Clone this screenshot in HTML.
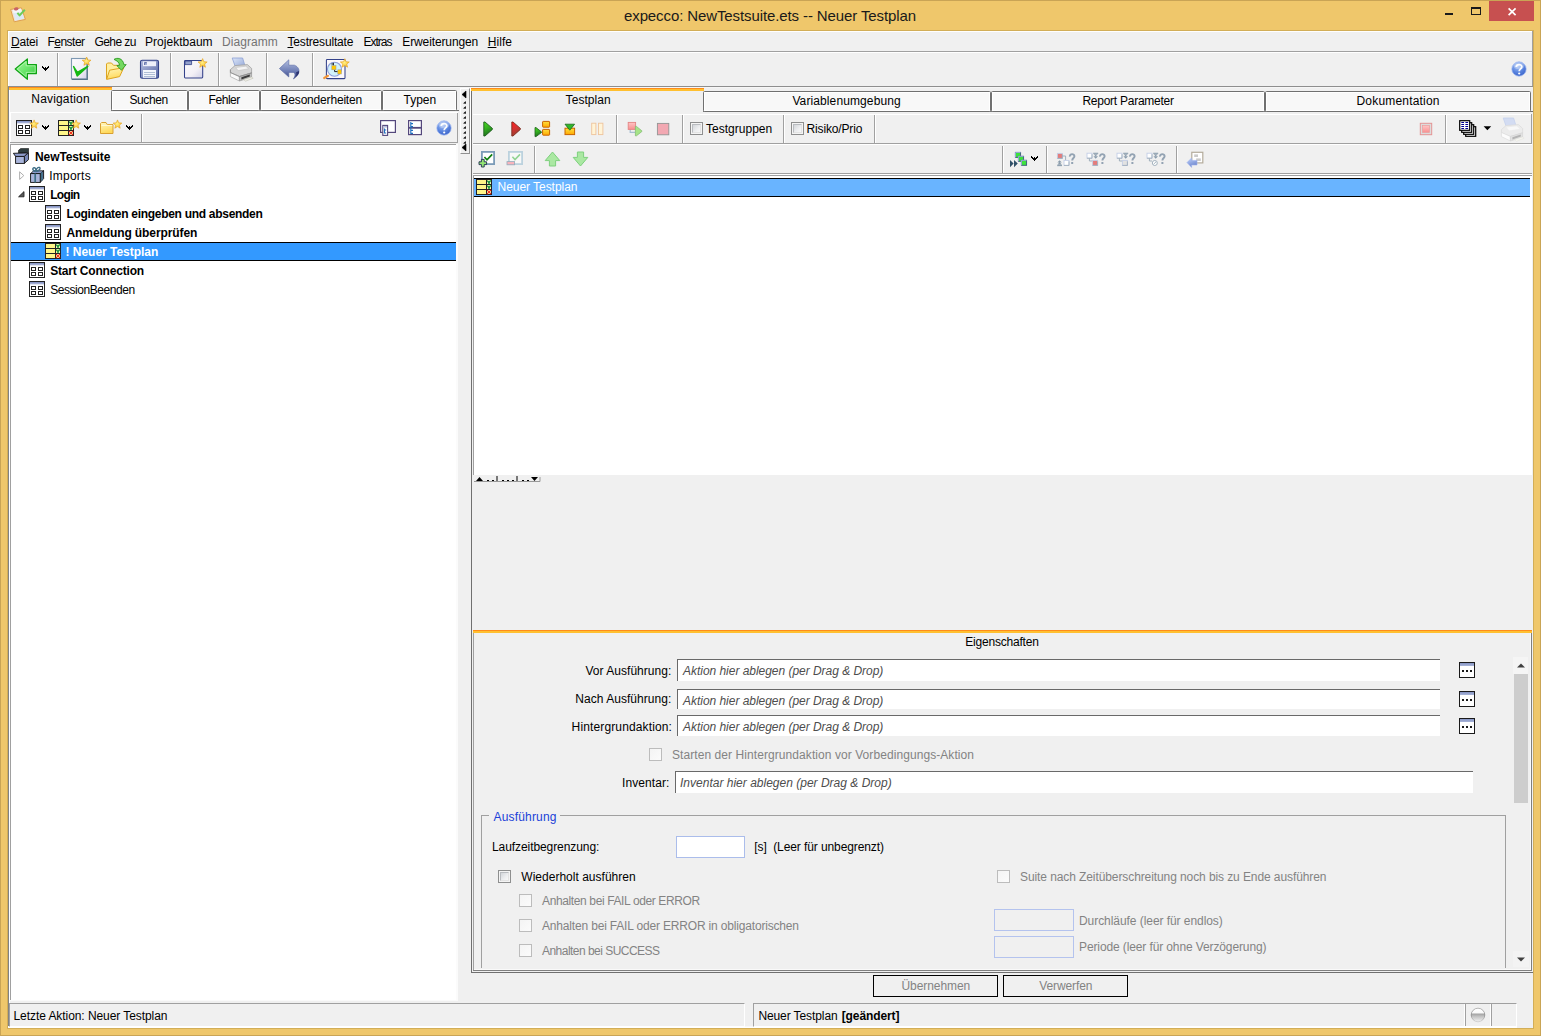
<!DOCTYPE html><html><head><meta charset="utf-8"><title>expecco</title><style>html,body{margin:0;padding:0}body{width:1541px;height:1036px;position:relative;overflow:hidden;background:#F0F0F0;font-family:"Liberation Sans",sans-serif;font-size:12px}div,span.t,svg{position:absolute;display:block}div{box-sizing:border-box}span.t{white-space:pre}u{text-decoration:underline;text-underline-offset:1px}</style></head><body>
<div style="left:0px;top:0px;width:1541px;height:1036px;background:#EFC76B;"></div>
<div style="left:0px;top:0px;width:1541px;height:1px;background:#C9A455;"></div>
<div style="left:0px;top:0px;width:1px;height:1036px;background:#C9A455;"></div>
<div style="left:1540px;top:0px;width:1px;height:1036px;background:#C9A455;"></div>
<div style="left:0px;top:1035px;width:1541px;height:1px;background:#C9A455;"></div>
<div style="left:7px;top:30px;width:1527px;height:999px;background:#D2AE58;"></div>
<div style="left:8px;top:31px;width:1525px;height:997px;background:#F0F0F0;"></div>
<div style="left:8px;top:31px;width:1525px;height:1px;background:#FFFFFF;"></div>
<div style="left:8px;top:31px;width:1px;height:56px;background:#FFFFFF;"></div>
<div style="left:1532px;top:31px;width:1px;height:56px;background:#A0A0A0;"></div>
<div style="left:8px;top:87px;width:1px;height:939px;background:#828282;"></div>
<div style="left:9px;top:87px;width:1px;height:916px;background:#FFFFFF;"></div>
<div style="left:8px;top:1026px;width:1509px;height:1px;background:#F8F8F8;"></div>
<div style="left:8px;top:1027px;width:1509px;height:1px;background:#FFFFFF;"></div>
<div style="left:1489px;top:1px;width:45px;height:20px;background:#C75050;"></div>
<svg style="left:1507px;top:7px" width="10" height="10" viewBox="0 0 10 10"><path d="M1.6 1.4 L8.6 8.2 M8.6 1.4 L1.6 8.2" stroke="#fff" stroke-width="1.7" fill="none"/></svg>
<div style="left:1445px;top:13px;width:8px;height:2px;background:#1a1a1a;"></div>
<div style="left:1471px;top:7px;width:10px;height:8px;border:1px solid #1a1a1a;border-top-width:2px"></div>
<span id="t1" class="t" style="left:624.00px;top:6px;font-size:15px;line-height:19px;font-weight:normal;font-style:normal;color:#1a1a1a;letter-spacing:-0.106px;">expecco: NewTestsuite.ets -- Neuer Testplan</span>
<div style="left:8px;top:51px;width:1525px;height:1px;background:#A0A0A0;"></div>
<div style="left:8px;top:52px;width:1524px;height:1px;background:#FFFFFF;"></div>
<span id="t2" class="t" style="left:11.00px;top:34px;font-size:12px;line-height:16px;font-weight:normal;font-style:normal;color:#000;letter-spacing:-0.212px;"><u>D</u>atei</span>
<span id="t3" class="t" style="left:47.50px;top:34px;font-size:12px;line-height:16px;font-weight:normal;font-style:normal;color:#000;letter-spacing:-0.531px;">F<u>e</u>nster</span>
<span id="t4" class="t" style="left:94.50px;top:34px;font-size:12px;line-height:16px;font-weight:normal;font-style:normal;color:#000;letter-spacing:-0.582px;">Gehe zu</span>
<span id="t5" class="t" style="left:145.00px;top:34px;font-size:12px;line-height:16px;font-weight:normal;font-style:normal;color:#000;letter-spacing:0.023px;">Projektbaum</span>
<span id="t6" class="t" style="left:222.00px;top:34px;font-size:12px;line-height:16px;font-weight:normal;font-style:normal;color:#737373;letter-spacing:0.065px;">Diagramm</span>
<span id="t7" class="t" style="left:287.50px;top:34px;font-size:12px;line-height:16px;font-weight:normal;font-style:normal;color:#000;letter-spacing:-0.180px;"><u>T</u>estresultate</span>
<span id="t8" class="t" style="left:363.50px;top:34px;font-size:12px;line-height:16px;font-weight:normal;font-style:normal;color:#000;letter-spacing:-1.002px;">Extras</span>
<span id="t9" class="t" style="left:402.30px;top:34px;font-size:12px;line-height:16px;font-weight:normal;font-style:normal;color:#000;letter-spacing:-0.117px;">Erweiterungen</span>
<span id="t10" class="t" style="left:487.70px;top:34px;font-size:12px;line-height:16px;font-weight:normal;font-style:normal;color:#000;letter-spacing:0.067px;"><u>H</u>ilfe</span>
<div style="left:8px;top:86px;width:1525px;height:1px;background:#8E8E8E;"></div>
<div style="left:9px;top:87px;width:1523px;height:1px;background:#F6F6F6;"></div>
<div style="left:57px;top:53px;width:1px;height:33px;background:#A0A0A0;"></div>
<div style="left:58px;top:53px;width:1px;height:33px;background:#FFFFFF;"></div>
<div style="left:170px;top:53px;width:1px;height:33px;background:#A0A0A0;"></div>
<div style="left:171px;top:53px;width:1px;height:33px;background:#FFFFFF;"></div>
<div style="left:218px;top:53px;width:1px;height:33px;background:#A0A0A0;"></div>
<div style="left:219px;top:53px;width:1px;height:33px;background:#FFFFFF;"></div>
<div style="left:266px;top:53px;width:1px;height:33px;background:#A0A0A0;"></div>
<div style="left:267px;top:53px;width:1px;height:33px;background:#FFFFFF;"></div>
<div style="left:312px;top:53px;width:1px;height:33px;background:#A0A0A0;"></div>
<div style="left:313px;top:53px;width:1px;height:33px;background:#FFFFFF;"></div>
<div style="left:111px;top:110px;width:348px;height:1px;background:#707070;"></div>
<div style="left:111px;top:90px;width:77px;height:21px;background:#F8F8F8;border:1px solid #707070;border-radius:1.5px;box-shadow:inset 0 0 0 1px #fff"></div>
<div style="left:188px;top:90px;width:72px;height:21px;background:#F8F8F8;border:1px solid #707070;border-radius:1.5px;box-shadow:inset 0 0 0 1px #fff"></div>
<div style="left:260px;top:90px;width:122px;height:21px;background:#F8F8F8;border:1px solid #707070;border-radius:1.5px;box-shadow:inset 0 0 0 1px #fff"></div>
<div style="left:382px;top:90px;width:75px;height:21px;background:#F8F8F8;border:1px solid #707070;border-radius:1.5px;box-shadow:inset 0 0 0 1px #fff"></div>
<div style="left:9px;top:87px;width:103px;height:1px;background:#FF8C1A;"></div>
<div style="left:9px;top:88px;width:103px;height:2px;background:#FFC030;"></div>
<span id="t11" class="t" style="left:31.30px;top:91px;font-size:12px;line-height:16px;font-weight:normal;font-style:normal;color:#000;letter-spacing:0.175px;">Navigation</span>
<span id="t12" class="t" style="left:129.50px;top:92px;font-size:12px;line-height:16px;font-weight:normal;font-style:normal;color:#000;letter-spacing:-0.405px;">Suchen</span>
<span id="t13" class="t" style="left:208.60px;top:92px;font-size:12px;line-height:16px;font-weight:normal;font-style:normal;color:#000;letter-spacing:-0.464px;">Fehler</span>
<span id="t14" class="t" style="left:280.50px;top:92px;font-size:12px;line-height:16px;font-weight:normal;font-style:normal;color:#000;letter-spacing:-0.184px;">Besonderheiten</span>
<span id="t15" class="t" style="left:403.50px;top:92px;font-size:12px;line-height:16px;font-weight:normal;font-style:normal;color:#000;letter-spacing:-0.004px;">Typen</span>
<div style="left:10px;top:112px;width:448px;height:1px;background:#FFFFFF;"></div>
<div style="left:10px;top:112px;width:1px;height:31px;background:#FFFFFF;"></div>
<div style="left:10px;top:142px;width:448px;height:1px;background:#A0A0A0;"></div>
<div style="left:457px;top:113px;width:1px;height:30px;background:#A0A0A0;"></div>
<div style="left:141px;top:114px;width:1px;height:28px;background:#A0A0A0;"></div>
<div style="left:142px;top:114px;width:1px;height:28px;background:#FFFFFF;"></div>
<div style="left:456px;top:144px;width:2px;height:857px;background:#FBFBFB;"></div>
<div style="left:10px;top:144px;width:446px;height:856px;background:#FFFFFF;border-top:1px solid #A0A0A0;border-left:1px solid #A0A0A0"></div>
<div style="left:10px;top:1000px;width:448px;height:1px;background:#FAFAFA;"></div>
<div style="left:11px;top:242px;width:445px;height:19px;background:#3399FF;border-top:1px solid #000;border-bottom:1px solid #000"></div>
<span id="t16" class="t" style="left:35.00px;top:149px;font-size:12px;line-height:16px;font-weight:bold;font-style:normal;color:#000;letter-spacing:-0.099px;">NewTestsuite</span>
<span id="t17" class="t" style="left:49.20px;top:168px;font-size:12px;line-height:16px;font-weight:normal;font-style:normal;color:#000;letter-spacing:0.249px;">Imports</span>
<span id="t18" class="t" style="left:50.20px;top:187px;font-size:12px;line-height:16px;font-weight:bold;font-style:normal;color:#000;letter-spacing:-0.681px;">Login</span>
<span id="t19" class="t" style="left:66.50px;top:206px;font-size:12px;line-height:16px;font-weight:bold;font-style:normal;color:#000;letter-spacing:-0.291px;">Logindaten eingeben und absenden</span>
<span id="t20" class="t" style="left:66.50px;top:225px;font-size:12px;line-height:16px;font-weight:bold;font-style:normal;color:#000;letter-spacing:-0.096px;">Anmeldung überprüfen</span>
<span id="t21" class="t" style="left:65.50px;top:244px;font-size:12px;line-height:16px;font-weight:bold;font-style:normal;color:#fff;letter-spacing:-0.020px;">! Neuer Testplan</span>
<span id="t22" class="t" style="left:50.20px;top:263px;font-size:12px;line-height:16px;font-weight:bold;font-style:normal;color:#000;letter-spacing:-0.183px;">Start Connection</span>
<span id="t23" class="t" style="left:50.20px;top:282px;font-size:12px;line-height:16px;font-weight:normal;font-style:normal;color:#000;letter-spacing:-0.451px;">SessionBeenden</span>
<div style="left:460px;top:88px;width:10px;height:66px;border-right:1px solid #909090;border-bottom:1px solid #909090;border-left:1px solid #fff;border-top:1px solid #fff"></div>
<svg style="left:461px;top:90px" width="6" height="9" viewBox="0 0 6 9"><path d="M5 1 L5 8 L1 4.5 Z" fill="#000" stroke="#000" stroke-width="0.6"/></svg>
<svg style="left:461px;top:143px" width="6" height="9" viewBox="0 0 6 9"><path d="M5 1 L5 8 L1 4.5 Z" fill="#000" stroke="#000" stroke-width="0.6"/></svg>
<svg style="left:463px;top:101px" width="3" height="3" viewBox="0 0 3 3"><path d="M2.8 0 V2.6 H0 Z" fill="#111"/><rect x="1.6" y="1.4" width="1.2" height="1.2" fill="#111"/></svg>
<svg style="left:463px;top:106px" width="3" height="3" viewBox="0 0 3 3"><path d="M2.8 0 V2.6 H0 Z" fill="#111"/><rect x="1.6" y="1.4" width="1.2" height="1.2" fill="#111"/></svg>
<svg style="left:463px;top:111px" width="3" height="3" viewBox="0 0 3 3"><path d="M2.8 0 V2.6 H0 Z" fill="#111"/><rect x="1.6" y="1.4" width="1.2" height="1.2" fill="#111"/></svg>
<svg style="left:463px;top:116px" width="3" height="3" viewBox="0 0 3 3"><path d="M2.8 0 V2.6 H0 Z" fill="#111"/><rect x="1.6" y="1.4" width="1.2" height="1.2" fill="#111"/></svg>
<svg style="left:463px;top:121px" width="3" height="3" viewBox="0 0 3 3"><path d="M2.8 0 V2.6 H0 Z" fill="#111"/><rect x="1.6" y="1.4" width="1.2" height="1.2" fill="#111"/></svg>
<svg style="left:463px;top:126px" width="3" height="3" viewBox="0 0 3 3"><path d="M2.8 0 V2.6 H0 Z" fill="#111"/><rect x="1.6" y="1.4" width="1.2" height="1.2" fill="#111"/></svg>
<svg style="left:463px;top:131px" width="3" height="3" viewBox="0 0 3 3"><path d="M2.8 0 V2.6 H0 Z" fill="#111"/><rect x="1.6" y="1.4" width="1.2" height="1.2" fill="#111"/></svg>
<svg style="left:463px;top:136px" width="3" height="3" viewBox="0 0 3 3"><path d="M2.8 0 V2.6 H0 Z" fill="#111"/><rect x="1.6" y="1.4" width="1.2" height="1.2" fill="#111"/></svg>
<svg style="left:463px;top:141px" width="3" height="3" viewBox="0 0 3 3"><path d="M2.8 0 V2.6 H0 Z" fill="#111"/><rect x="1.6" y="1.4" width="1.2" height="1.2" fill="#111"/></svg>
<div style="left:470px;top:88px;width:1px;height:66px;background:#FFFFFF;"></div>
<div style="left:471px;top:88px;width:1px;height:885px;background:#707070;"></div>
<div style="left:703px;top:111px;width:830px;height:1px;background:#707070;"></div>
<div style="left:703px;top:91px;width:288px;height:21px;background:#F8F8F8;border:1px solid #707070;border-radius:1.5px;box-shadow:inset 0 0 0 1px #fff"></div>
<div style="left:991px;top:91px;width:274px;height:21px;background:#F8F8F8;border:1px solid #707070;border-radius:1.5px;box-shadow:inset 0 0 0 1px #fff"></div>
<div style="left:1265px;top:91px;width:266px;height:21px;background:#F8F8F8;border:1px solid #707070;border-radius:1.5px;box-shadow:inset 0 0 0 1px #fff"></div>
<div style="left:471px;top:88px;width:233px;height:1px;background:#FF8C1A;"></div>
<div style="left:471px;top:89px;width:233px;height:2px;background:#FFC030;"></div>
<span id="t24" class="t" style="left:565.60px;top:92px;font-size:12px;line-height:16px;font-weight:normal;font-style:normal;color:#000;letter-spacing:0.054px;">Testplan</span>
<span id="t25" class="t" style="left:792.40px;top:93px;font-size:12px;line-height:16px;font-weight:normal;font-style:normal;color:#000;letter-spacing:0.109px;">Variablenumgebung</span>
<span id="t26" class="t" style="left:1082.40px;top:93px;font-size:12px;line-height:16px;font-weight:normal;font-style:normal;color:#000;letter-spacing:-0.252px;">Report Parameter</span>
<span id="t27" class="t" style="left:1356.50px;top:93px;font-size:12px;line-height:16px;font-weight:normal;font-style:normal;color:#000;letter-spacing:0.188px;">Dokumentation</span>
<div style="left:473px;top:114px;width:1059px;height:1px;background:#FFFFFF;"></div>
<div style="left:473px;top:143px;width:1059px;height:1px;background:#A0A0A0;"></div>
<div style="left:473px;top:144px;width:1059px;height:1px;background:#FFFFFF;"></div>
<div style="left:1531px;top:114px;width:1px;height:30px;background:#A0A0A0;"></div>
<div style="left:616px;top:115px;width:1px;height:28px;background:#A0A0A0;"></div>
<div style="left:617px;top:115px;width:1px;height:28px;background:#FFFFFF;"></div>
<div style="left:682px;top:115px;width:1px;height:28px;background:#A0A0A0;"></div>
<div style="left:683px;top:115px;width:1px;height:28px;background:#FFFFFF;"></div>
<div style="left:783px;top:115px;width:1px;height:28px;background:#A0A0A0;"></div>
<div style="left:784px;top:115px;width:1px;height:28px;background:#FFFFFF;"></div>
<div style="left:874px;top:115px;width:1px;height:28px;background:#A0A0A0;"></div>
<div style="left:875px;top:115px;width:1px;height:28px;background:#FFFFFF;"></div>
<div style="left:1445px;top:115px;width:1px;height:28px;background:#A0A0A0;"></div>
<div style="left:1446px;top:115px;width:1px;height:28px;background:#FFFFFF;"></div>
<div style="left:690px;top:122px;width:13px;height:13px;background:#F4F4F4;border:1px solid #8E8F8F"></div>
<div style="left:692px;top:124px;width:9px;height:9px;background:linear-gradient(135deg,#D3D6DA,#EDEEF0 60%,#F8F8F8);border:1px solid #E3E3E3;border-top-color:#B9BCC0;border-left-color:#B9BCC0"></div>
<span id="t28" class="t" style="left:706.00px;top:121px;font-size:12px;line-height:16px;font-weight:normal;font-style:normal;color:#000;letter-spacing:0.013px;">Testgruppen</span>
<div style="left:791px;top:122px;width:13px;height:13px;background:#F4F4F4;border:1px solid #8E8F8F"></div>
<div style="left:793px;top:124px;width:9px;height:9px;background:linear-gradient(135deg,#D3D6DA,#EDEEF0 60%,#F8F8F8);border:1px solid #E3E3E3;border-top-color:#B9BCC0;border-left-color:#B9BCC0"></div>
<span id="t29" class="t" style="left:806.50px;top:121px;font-size:12px;line-height:16px;font-weight:normal;font-style:normal;color:#000;letter-spacing:-0.147px;">Risiko/Prio</span>
<div style="left:473px;top:173px;width:1059px;height:1px;background:#A0A0A0;"></div>
<div style="left:473px;top:174px;width:1059px;height:1px;background:#FFFFFF;"></div>
<div style="left:534px;top:146px;width:1px;height:27px;background:#A0A0A0;"></div>
<div style="left:535px;top:146px;width:1px;height:27px;background:#FFFFFF;"></div>
<div style="left:1002px;top:146px;width:1px;height:27px;background:#A0A0A0;"></div>
<div style="left:1003px;top:146px;width:1px;height:27px;background:#FFFFFF;"></div>
<div style="left:1046px;top:146px;width:1px;height:27px;background:#A0A0A0;"></div>
<div style="left:1047px;top:146px;width:1px;height:27px;background:#FFFFFF;"></div>
<div style="left:1176px;top:146px;width:1px;height:27px;background:#A0A0A0;"></div>
<div style="left:1177px;top:146px;width:1px;height:27px;background:#FFFFFF;"></div>
<div style="left:473px;top:175px;width:1059px;height:300px;background:#FFFFFF;border-top:1px solid #A0A0A0;border-left:1px solid #A0A0A0"></div>
<div style="left:474px;top:178px;width:1056px;height:19px;background:#69B4FF;border-top:1px solid #000;border-bottom:1px solid #000"></div>
<span id="t30" class="t" style="left:497.50px;top:179px;font-size:12px;line-height:16px;font-weight:normal;font-style:normal;color:#fff;letter-spacing:-0.041px;">Neuer Testplan</span>
<svg style="left:474px;top:476px" width="67" height="6" viewBox="0 0 67 6"><path d="M0 5.5 H66 V1" stroke="#999" fill="none"/><path d="M2 5 L5.5 1 L9 5 Z M57 1 L64 1 L60.5 5 Z" fill="#000"/><path d="M23 0 V5 M43 0 V5" stroke="#000"/><path d="M13 4.5 h2 M18 4.5 h2 M28 4.5 h2 M33 4.5 h2 M38 4.5 h2 M48 4.5 h2 M53 4.5 h2" stroke="#000"/></svg>
<div style="left:473px;top:630px;width:1059px;height:1px;background:#FF8C1A;"></div>
<div style="left:473px;top:631px;width:1059px;height:2px;background:#FFC030;"></div>
<div style="left:473px;top:633px;width:1px;height:337px;background:#A0A0A0;"></div>
<div style="left:1531px;top:633px;width:1px;height:338px;background:#808080;"></div>
<div style="left:1530px;top:633px;width:1px;height:337px;background:#FAFAFA;"></div>
<div style="left:474px;top:969px;width:1057px;height:1px;background:#FAFAFA;"></div>
<div style="left:473px;top:970px;width:1059px;height:1px;background:#808080;"></div>
<div style="left:471px;top:972px;width:1062px;height:1px;background:#707070;"></div>
<span id="t31" class="t" style="left:965.30px;top:634px;font-size:12px;line-height:16px;font-weight:normal;font-style:normal;color:#000;letter-spacing:-0.207px;">Eigenschaften</span>
<div style="left:677px;top:659px;width:763px;height:22px;background:#FFFFFF;border-top:1px solid #696969;border-left:1px solid #696969"></div>
<div style="left:677px;top:689px;width:763px;height:20px;background:#FFFFFF;border-top:1px solid #696969;border-left:1px solid #696969"></div>
<div style="left:677px;top:715px;width:763px;height:21px;background:#FFFFFF;border-top:1px solid #696969;border-left:1px solid #696969"></div>
<span id="t32" class="t" style="left:585.50px;top:663px;font-size:12px;line-height:16px;font-weight:normal;font-style:normal;color:#000;letter-spacing:0.027px;">Vor Ausführung:</span>
<span id="t33" class="t" style="left:575.30px;top:691px;font-size:12px;line-height:16px;font-weight:normal;font-style:normal;color:#000;letter-spacing:0.038px;">Nach Ausführung:</span>
<span id="t34" class="t" style="left:571.60px;top:719px;font-size:12px;line-height:16px;font-weight:normal;font-style:normal;color:#000;letter-spacing:0.134px;">Hintergrundaktion:</span>
<span id="t35" class="t" style="left:683.00px;top:663px;font-size:12px;line-height:16px;font-weight:normal;font-style:italic;color:#4d4d4d;letter-spacing:-0.032px;">Aktion hier ablegen (per Drag &amp; Drop)</span>
<span id="t36" class="t" style="left:683.00px;top:693px;font-size:12px;line-height:16px;font-weight:normal;font-style:italic;color:#4d4d4d;letter-spacing:-0.032px;">Aktion hier ablegen (per Drag &amp; Drop)</span>
<span id="t37" class="t" style="left:683.00px;top:719px;font-size:12px;line-height:16px;font-weight:normal;font-style:italic;color:#4d4d4d;letter-spacing:-0.032px;">Aktion hier ablegen (per Drag &amp; Drop)</span>
<div style="left:1459px;top:662px;width:16px;height:16px;background:#FFFFFF;border:1px solid #1a1a1a"></div>
<div style="left:1460px;top:663px;width:14px;height:3px;background:linear-gradient(#8493C2,#A9B5D9);"></div>
<div style="left:1462px;top:670px;width:2px;height:2px;background:#1a1a1a;"></div>
<div style="left:1466px;top:670px;width:2px;height:2px;background:#1a1a1a;"></div>
<div style="left:1470px;top:670px;width:2px;height:2px;background:#1a1a1a;"></div>
<div style="left:1459px;top:691px;width:16px;height:16px;background:#FFFFFF;border:1px solid #1a1a1a"></div>
<div style="left:1460px;top:692px;width:14px;height:3px;background:linear-gradient(#8493C2,#A9B5D9);"></div>
<div style="left:1462px;top:699px;width:2px;height:2px;background:#1a1a1a;"></div>
<div style="left:1466px;top:699px;width:2px;height:2px;background:#1a1a1a;"></div>
<div style="left:1470px;top:699px;width:2px;height:2px;background:#1a1a1a;"></div>
<div style="left:1459px;top:718px;width:16px;height:16px;background:#FFFFFF;border:1px solid #1a1a1a"></div>
<div style="left:1460px;top:719px;width:14px;height:3px;background:linear-gradient(#8493C2,#A9B5D9);"></div>
<div style="left:1462px;top:726px;width:2px;height:2px;background:#1a1a1a;"></div>
<div style="left:1466px;top:726px;width:2px;height:2px;background:#1a1a1a;"></div>
<div style="left:1470px;top:726px;width:2px;height:2px;background:#1a1a1a;"></div>
<div style="left:649px;top:748px;width:13px;height:13px;background:linear-gradient(135deg,#F4F4F4,#FBFBFB);border:1px solid #BCBCBC"></div>
<span id="t38" class="t" style="left:672.00px;top:747px;font-size:12px;line-height:16px;font-weight:normal;font-style:normal;color:#838383;letter-spacing:0.072px;">Starten der Hintergrundaktion vor Vorbedingungs-Aktion</span>
<span id="t39" class="t" style="left:622.00px;top:775px;font-size:12px;line-height:16px;font-weight:normal;font-style:normal;color:#000;letter-spacing:0.080px;">Inventar:</span>
<div style="left:675px;top:771px;width:798px;height:22px;background:#FFFFFF;border-top:1px solid #696969;border-left:1px solid #696969"></div>
<span id="t40" class="t" style="left:680.00px;top:775px;font-size:12px;line-height:16px;font-weight:normal;font-style:italic;color:#4d4d4d;letter-spacing:0.007px;">Inventar hier ablegen (per Drag &amp; Drop)</span>
<div style="left:1513px;top:657px;width:15px;height:17px;background:#F5F5F5;"></div>
<div style="left:1513px;top:951px;width:16px;height:16px;background:#F3F3F3;"></div>
<div style="left:1514px;top:674px;width:14px;height:129px;background:#CDCDCD;"></div>
<svg style="left:1517px;top:663px" width="8" height="5" viewBox="0 0 8 5"><path d="M0 4.5 L4 0.5 L8 4.5 Z" fill="#404040"/></svg>
<svg style="left:1517px;top:957px" width="8" height="5" viewBox="0 0 8 5"><path d="M0 0.5 L4 4.5 L8 0.5 Z" fill="#404040"/></svg>
<div style="left:481px;top:815px;width:1025px;height:153px;border:1px solid #A0A0A0;border-bottom:none"></div>
<div style="left:489px;top:810px;width:71px;height:12px;background:#F0F0F0;"></div>
<span id="t41" class="t" style="left:493.50px;top:809px;font-size:12px;line-height:16px;font-weight:normal;font-style:normal;color:#2040D8;letter-spacing:0.177px;">Ausführung</span>
<span id="t42" class="t" style="left:492.00px;top:839px;font-size:12px;line-height:16px;font-weight:normal;font-style:normal;color:#000;letter-spacing:-0.079px;">Laufzeitbegrenzung:</span>
<div style="left:676px;top:836px;width:69px;height:22px;background:#FFFFFF;border:1px solid #ABBDEB"></div>
<span id="t43" class="t" style="left:754.30px;top:839px;font-size:12px;line-height:16px;font-weight:normal;font-style:normal;color:#000;letter-spacing:-0.095px;">[s]  (Leer für unbegrenzt)</span>
<div style="left:498px;top:870px;width:13px;height:13px;background:#F4F4F4;border:1px solid #8E8F8F"></div>
<div style="left:500px;top:872px;width:9px;height:9px;background:linear-gradient(135deg,#D3D6DA,#EDEEF0 60%,#F8F8F8);border:1px solid #E3E3E3;border-top-color:#B9BCC0;border-left-color:#B9BCC0"></div>
<span id="t44" class="t" style="left:521.30px;top:869px;font-size:12px;line-height:16px;font-weight:normal;font-style:normal;color:#000;letter-spacing:0.016px;">Wiederholt ausführen</span>
<div style="left:519px;top:894px;width:13px;height:13px;background:linear-gradient(135deg,#F4F4F4,#FBFBFB);border:1px solid #BCBCBC"></div>
<span id="t45" class="t" style="left:542.00px;top:893px;font-size:12px;line-height:16px;font-weight:normal;font-style:normal;color:#838383;letter-spacing:-0.374px;">Anhalten bei FAIL oder ERROR</span>
<div style="left:519px;top:919px;width:13px;height:13px;background:linear-gradient(135deg,#F4F4F4,#FBFBFB);border:1px solid #BCBCBC"></div>
<span id="t46" class="t" style="left:542.00px;top:918px;font-size:12px;line-height:16px;font-weight:normal;font-style:normal;color:#838383;letter-spacing:-0.174px;">Anhalten bei FAIL oder ERROR in obligatorischen</span>
<div style="left:519px;top:944px;width:13px;height:13px;background:linear-gradient(135deg,#F4F4F4,#FBFBFB);border:1px solid #BCBCBC"></div>
<span id="t47" class="t" style="left:542.00px;top:943px;font-size:12px;line-height:16px;font-weight:normal;font-style:normal;color:#838383;letter-spacing:-0.530px;">Anhalten bei SUCCESS</span>
<div style="left:997px;top:870px;width:13px;height:13px;background:linear-gradient(135deg,#F4F4F4,#FBFBFB);border:1px solid #BCBCBC"></div>
<span id="t48" class="t" style="left:1020.00px;top:869px;font-size:12px;line-height:16px;font-weight:normal;font-style:normal;color:#838383;letter-spacing:-0.092px;">Suite nach Zeitüberschreitung noch bis zu Ende ausführen</span>
<div style="left:994px;top:909px;width:80px;height:22px;background:#F0F0F0;border:1px solid #B4C3EE"></div>
<span id="t49" class="t" style="left:1079.00px;top:913px;font-size:12px;line-height:16px;font-weight:normal;font-style:normal;color:#838383;letter-spacing:-0.059px;">Durchläufe (leer für endlos)</span>
<div style="left:994px;top:936px;width:80px;height:22px;background:#F0F0F0;border:1px solid #B4C3EE"></div>
<span id="t50" class="t" style="left:1079.00px;top:939px;font-size:12px;line-height:16px;font-weight:normal;font-style:normal;color:#838383;letter-spacing:-0.116px;">Periode (leer für ohne Verzögerung)</span>
<div style="left:873px;top:975px;width:125px;height:22px;background:#F0F0F0;border:1px solid #000"></div>
<span id="t51" class="t" style="left:901.50px;top:978px;font-size:12px;line-height:16px;font-weight:normal;font-style:normal;color:#838383;letter-spacing:-0.067px;">Übernehmen</span>
<div style="left:1003px;top:975px;width:125px;height:22px;background:#F0F0F0;border:1px solid #000"></div>
<span id="t52" class="t" style="left:1039.30px;top:978px;font-size:12px;line-height:16px;font-weight:normal;font-style:normal;color:#838383;letter-spacing:-0.107px;">Verwerfen</span>
<div style="left:9px;top:1003px;width:736px;height:24px;border-top:1px solid #A0A0A0;border-left:1px solid #A0A0A0;border-right:1px solid #fff;border-bottom:1px solid #fff"></div>
<div style="left:753px;top:1003px;width:764px;height:24px;border-top:1px solid #A0A0A0;border-left:1px solid #A0A0A0;border-bottom:1px solid #fff;border-right:1px solid #fff"></div>
<span id="t53" class="t" style="left:13.50px;top:1008px;font-size:12px;line-height:16px;font-weight:normal;font-style:normal;color:#000;letter-spacing:-0.067px;">Letzte Aktion: Neuer Testplan</span>
<span id="t54" class="t" style="left:758.40px;top:1008px;font-size:12px;line-height:16px;font-weight:normal;font-style:normal;color:#000;letter-spacing:-0.095px;">Neuer Testplan</span>
<span id="t55" class="t" style="left:841.70px;top:1008px;font-size:12px;line-height:16px;font-weight:bold;font-style:normal;color:#000;letter-spacing:-0.097px;">[geändert]</span>
<div style="left:1465px;top:1004px;width:1px;height:22px;background:#A0A0A0;"></div>
<div style="left:1464px;top:1004px;width:1px;height:22px;background:#FFFFFF;"></div>
<div style="left:1491px;top:1004px;width:1px;height:22px;background:#A0A0A0;"></div>
<div style="left:1490px;top:1004px;width:1px;height:22px;background:#FFFFFF;"></div>
<svg style="left:1470px;top:1007px" width="16" height="16" viewBox="0 0 16 16"><defs><linearGradient id="ball" x1="0" y1="0" x2="0" y2="1"><stop offset="0" stop-color="#FFFFFF"/><stop offset="0.32" stop-color="#FAFAFA"/><stop offset="0.45" stop-color="#A8A8A8"/><stop offset="0.62" stop-color="#C4C4C4"/><stop offset="1" stop-color="#F2F2F2"/></linearGradient><linearGradient id="ballS" x1="0" y1="0" x2="0" y2="1"><stop offset="0" stop-color="#9A9A9A"/><stop offset="0.5" stop-color="#7C7C7C"/><stop offset="1" stop-color="#C8C8C8"/></linearGradient></defs><circle cx="8" cy="8" r="6.8" fill="url(#ball)" stroke="url(#ballS)" stroke-width="0.7"/></svg>
<svg width="0" height="0" style="left:0;top:0"><defs><linearGradient id="gGreen" x1="0" y1="0" x2="1" y2="1"><stop offset="0" stop-color="#A8F8A0"/><stop offset="0.5" stop-color="#6CE66C"/><stop offset="1" stop-color="#38C840"/></linearGradient><linearGradient id="gPage" x1="0" y1="0" x2="1" y2="1"><stop offset="0" stop-color="#FBFBFE"/><stop offset="0.6" stop-color="#F3F0F6"/><stop offset="1" stop-color="#CFCFE6"/></linearGradient><radialGradient id="gStar" cx="45%" cy="45%" r="60%"><stop offset="0" stop-color="#FFF08A"/><stop offset="0.55" stop-color="#FCD44E"/><stop offset="1" stop-color="#F0AE28"/></radialGradient><linearGradient id="gFold" x1="0" y1="0" x2="0.3" y2="1"><stop offset="0" stop-color="#FFF7C0"/><stop offset="1" stop-color="#FFD95A"/></linearGradient><linearGradient id="gFlop" x1="0" y1="0" x2="1" y2="1"><stop offset="0" stop-color="#B4BEDF"/><stop offset="1" stop-color="#5A6AA6"/></linearGradient><linearGradient id="gUndo" x1="0" y1="0" x2="0" y2="1"><stop offset="0" stop-color="#B4C0E2"/><stop offset="0.6" stop-color="#6C7CB4"/><stop offset="1" stop-color="#34407E"/></linearGradient><linearGradient id="gPaper" x1="0" y1="0" x2="1" y2="1"><stop offset="0" stop-color="#DDE6F8"/><stop offset="1" stop-color="#93A8D8"/></linearGradient><radialGradient id="gHelp" cx="40%" cy="30%" r="75%"><stop offset="0" stop-color="#A9C4F5"/><stop offset="0.55" stop-color="#5B86E0"/><stop offset="1" stop-color="#3A62C8"/></radialGradient><linearGradient id="gBar" x1="0" y1="0" x2="0" y2="1"><stop offset="0" stop-color="#7F8EC0"/><stop offset="1" stop-color="#B5BEDD"/></linearGradient><linearGradient id="gPlayG" x1="0" y1="0" x2="1" y2="0"><stop offset="0" stop-color="#1E8A1E"/><stop offset="1" stop-color="#58D058"/></linearGradient><linearGradient id="gPlayR" x1="0" y1="0" x2="1" y2="0"><stop offset="0" stop-color="#A01818"/><stop offset="1" stop-color="#F04040"/></linearGradient><linearGradient id="gBox" x1="0" y1="0" x2="1" y2="1"><stop offset="0" stop-color="#AEB8D8"/><stop offset="1" stop-color="#6E7CAC"/></linearGradient></defs></svg>
<svg style="left:8px;top:5px" width="20" height="20" viewBox="0 0 20 20"><path d="M2.6 4.4 L13.4 2.8 L17.4 14.4 L6.2 16.8 Z" fill="#F3E2D0" stroke="#DFA050" stroke-width="1" stroke-linejoin="round"/><path d="M4.6 5 L13 3.8 L16.2 13.4 L7.4 15.4 Z" fill="#DDE9F6"/><path d="M4.6 5 L13 3.8 L14 6.8 L5.6 8.2 Z" fill="#F4F4F8"/><ellipse cx="8.2" cy="3.8" rx="2.3" ry="1.6" fill="#C86464" transform="rotate(-10 8.2 3.8)"/><path d="M9.4 7.8 L11.6 10.4 L16.8 4.8" stroke="#6ECC58" stroke-width="2" fill="none" stroke-linejoin="round"/></svg>
<svg style="left:13px;top:56px" width="26" height="26" viewBox="0 0 26 26"><path d="M2.2 13 L14.4 2.9 L14.4 8.6 L23.4 8.6 L23.4 17.6 L14.4 17.6 L14.4 23.3 Z" fill="url(#gGreen)" stroke="#10A414" stroke-width="1.2" stroke-linejoin="round"/><path d="M4.2 13 L13.2 5.6 L13.2 9.8 L22.2 9.8 L22.2 16.4 L13.2 16.4 L13.2 20.6 Z" fill="none" stroke="#C4FAC0" stroke-width="0.8" opacity="0.8"/></svg>
<svg style="left:42px;top:66px" width="7" height="5" viewBox="0 0 7 5"><path d="M0 0h1v1h-1zM6 0h1v1h-1zM0 1h1v1h-1zM1 1h1v1h-1zM3 1h1v1h-1zM5 1h1v1h-1zM6 1h1v1h-1zM1 2h1v1h-1zM2 2h1v1h-1zM3 2h1v1h-1zM4 2h1v1h-1zM5 2h1v1h-1zM2 3h1v1h-1zM3 3h1v1h-1zM4 3h1v1h-1zM3 4h1v1h-1z" fill="#000" shape-rendering="crispEdges"/></svg>
<svg style="left:69px;top:55px" width="24" height="27" viewBox="0 0 24 27"><rect x="2.5" y="3.5" width="15.5" height="20.5" fill="url(#gPage)" stroke="#7E98B2" stroke-width="1.1"/><path d="M3 24.3 H18.3 V4" stroke="#587488" stroke-width="1.2" fill="none"/><path d="M4.6 11.6 L8.2 21 L18.8 11.4 L8.4 17.4 Z" fill="#14B814" stroke="#14B814" stroke-width="1.4" stroke-linejoin="round"/><polygon points="17.60,2.00 18.82,4.93 21.97,5.18 19.57,7.24 20.30,10.32 17.60,8.67 14.90,10.32 15.63,7.24 13.23,5.18 16.38,4.93" fill="url(#gStar)" stroke="#E6A11E" stroke-width="0.6" stroke-linejoin="round"/></svg>
<svg style="left:104px;top:56px" width="24" height="26" viewBox="0 0 24 26"><path d="M2.5 23 L2.5 8 L3.5 7 L7.5 7 L9.5 9.3 L17 9.3 L17 13" fill="#FFEFA0" stroke="#DDA420" stroke-width="1"/><path d="M2.6 23.4 L5.6 14.2 L19.8 11.6 L15.6 20.6 Z" fill="url(#gFold)" stroke="#DDA420" stroke-width="1" stroke-linejoin="round"/><path d="M10 3.4 C13 1.4 18.8 1.8 20 8.8 L22.2 8.6 L17.5 14.2 L12.8 9.6 L15.6 9.2 C15.2 6.2 12.8 4.6 10 3.4 Z" fill="#74D860" stroke="#2C9A24" stroke-width="0.9" stroke-linejoin="round"/></svg>
<svg style="left:138px;top:58px" width="23" height="23" viewBox="0 0 23 23"><rect x="2.5" y="2.3" width="18" height="18" rx="1.6" fill="url(#gFlop)" stroke="#36468A" stroke-width="1.1"/><rect x="5" y="3.4" width="13" height="4.8" fill="#EEF1FA"/><rect x="6.2" y="4.2" width="2.6" height="2.8" fill="#4C5C9C"/><rect x="7.2" y="5.2" width="1.6" height="1.8" fill="#B8C4E4"/><rect x="5" y="12" width="13" height="7.8" fill="#F4F6FC"/><path d="M6 14.5 H17 M6 16.5 H17 M6 18.5 H17" stroke="#A8B8D0" stroke-width="0.9"/></svg>
<svg style="left:182px;top:56px" width="28" height="25" viewBox="0 0 28 25"><rect x="2.5" y="4.5" width="18.2" height="17.4" rx="0.8" fill="url(#gPage)" stroke="#34428A" stroke-width="1.05"/><path d="M3 5 H9.6 V8.6 H3 Z" fill="#93A1CC" stroke="#34428A" stroke-width="0.8"/><polygon points="20.60,2.60 21.87,5.65 25.17,5.92 22.65,8.07 23.42,11.28 20.60,9.56 17.78,11.28 18.55,8.07 16.03,5.92 19.33,5.65" fill="url(#gStar)" stroke="#E6A11E" stroke-width="0.6" stroke-linejoin="round"/></svg>
<svg style="left:228px;top:55px" width="27" height="28" viewBox="0 0 27 28"><path d="M4.2 3 L14.6 3 L17 10.8 L7.4 12 Z" fill="url(#gPaper)" stroke="#8CA0D4" stroke-width="0.8"/><path d="M2.4 14.6 L7 10.6 L19.4 9.6 L23.6 13.4 L23.6 18 L11.4 21.6 L2.4 17.6 Z" fill="#D6D6D6" stroke="#9A9A9A" stroke-width="0.7"/><path d="M7.6 12.6 L17.8 11.2 L20.6 13.8 L10.2 15.6 Z" fill="#F4F4F4" stroke="#BDBDBD" stroke-width="0.5"/><path d="M2.4 17.4 L11.4 21.4 L11.4 26 L2.4 21.6 Z" fill="#FAFAFA" stroke="#A8A8A8" stroke-width="0.7"/><path d="M11.4 21.4 L23.6 17.8 L23.6 22 L11.4 26 Z" fill="#BEBEBE" stroke="#989898" stroke-width="0.7"/><path d="M2.4 14.6 L2.4 17.6 L11.4 21.6 L23.6 18" fill="none" stroke="#8A8A8A" stroke-width="0.7"/><path d="M13.4 22.2 L21.8 19.6 L21.8 21.4 L13.4 24.4 Z" fill="#3C3C3C"/><path d="M15.6 24.6 L23.4 22 L25.2 23.2 L17.6 26.2 Z" fill="#EFEFE8" stroke="#B8B8A8" stroke-width="0.5"/></svg>
<svg style="left:277px;top:57px" width="25" height="25" viewBox="0 0 25 25"><path d="M2.4 11.6 L11.8 2.8 L11.8 8.2 L17.4 8.2 C21.4 9.6 23.4 13.6 21 17.6 L16.4 22 C18.8 18.4 18.2 15.8 16.2 15.4 L11.8 15.4 L11.8 20 Z" fill="url(#gUndo)" stroke="#5868A4" stroke-width="0.6" stroke-linejoin="round"/><path d="M16.6 21.8 C19.4 19 20 16.8 19 15.4 L21.8 14 C22.8 16.4 20 19.6 16.6 21.8 Z" fill="#2A3270"/></svg>
<svg style="left:321px;top:56px" width="30" height="26" viewBox="0 0 30 26"><rect x="5.4" y="3.4" width="18.6" height="19.2" rx="0.8" fill="#FBF8FA" stroke="#34428A" stroke-width="1.05"/><path d="M7 19.8 L3.2 22" stroke="#F2963A" stroke-width="2.2" stroke-linecap="round"/><circle cx="13.5" cy="13.2" r="7" fill="#D2F2FA" stroke="#8E9EDC" stroke-width="1.1"/><path d="M10.4 8 H12.4 M12.4 6.8 V9.6 M13.6 13.8 V15.6 H16.8" stroke="#111" stroke-width="0.9" fill="none"/><rect x="10.8" y="9.6" width="4.2" height="4.2" fill="#FFC800" stroke="#9A9A9A" stroke-width="0.5"/><rect x="16.8" y="13.8" width="3.6" height="4.2" fill="#FFC800" stroke="#9A9A9A" stroke-width="0.5"/><polygon points="23.80,2.70 25.04,5.69 28.27,5.95 25.81,8.05 26.56,11.20 23.80,9.52 21.04,11.20 21.79,8.05 19.33,5.95 22.56,5.69" fill="url(#gStar)" stroke="#E6A11E" stroke-width="0.6" stroke-linejoin="round"/></svg>
<svg style="left:1510px;top:60px" width="18" height="18" viewBox="0 0 18 18"><circle cx="9" cy="9" r="7.2" fill="url(#gHelp)" stroke="#9DB8F2" stroke-width="0.7"/><ellipse cx="9" cy="5.6" rx="5.6" ry="3.6" fill="#fff" opacity="0.28"/><path d="M6.2 7 C6.4 3.8 11.8 3.8 11.8 6.8 C11.8 8.8 9.2 9 9.2 11.2" stroke="#fff" stroke-width="1.8" fill="none" opacity="0.95"/><circle cx="9.2" cy="13.5" r="1.1" fill="#fff"/></svg>
<svg style="left:16px;top:120px" width="16" height="16" viewBox="0 0 16 16"><rect x="0.5" y="0.5" width="15" height="15" fill="#fff" stroke="#222" stroke-width="1"/><rect x="1" y="1" width="14" height="2.4" fill="url(#gBar)"/><rect x="2.5" y="5.5" width="4" height="3" fill="#fff" stroke="#222"/><rect x="9.5" y="5.5" width="4" height="3" fill="#fff" stroke="#222"/><rect x="2.5" y="10.5" width="4" height="3" fill="#fff" stroke="#222"/><rect x="9.5" y="10.5" width="4" height="3" fill="#fff" stroke="#222"/></svg>
<svg style="left:28px;top:118px" width="12" height="12" viewBox="0 0 12 12"><polygon points="6.10,1.90 7.32,4.83 10.47,5.08 8.07,7.14 8.80,10.22 6.10,8.57 3.40,10.22 4.13,7.14 1.73,5.08 4.88,4.83" fill="url(#gStar)" stroke="#E6A11E" stroke-width="0.6" stroke-linejoin="round"/></svg>
<svg style="left:42px;top:125px" width="7" height="5" viewBox="0 0 7 5"><path d="M0 0h1v1h-1zM6 0h1v1h-1zM0 1h1v1h-1zM1 1h1v1h-1zM3 1h1v1h-1zM5 1h1v1h-1zM6 1h1v1h-1zM1 2h1v1h-1zM2 2h1v1h-1zM3 2h1v1h-1zM4 2h1v1h-1zM5 2h1v1h-1zM2 3h1v1h-1zM3 3h1v1h-1zM4 3h1v1h-1zM3 4h1v1h-1z" fill="#000" shape-rendering="crispEdges"/></svg>
<svg style="left:58px;top:120px" width="16" height="16" viewBox="0 0 16 16"><rect x="0.5" y="0.5" width="15" height="15" fill="#FFF689" stroke="#222" stroke-width="1"/><rect x="11" y="1" width="4" height="14" fill="#F4FBB0"/><path d="M0 5.5 H16 M0 10.5 H16 M10.5 0 V16" stroke="#222" stroke-width="1"/><path d="M11.2 1.6 L13 3.6 L14.8 1.4 M13 3.4 V5" stroke="#10903A" stroke-width="1.4" fill="none"/><path d="M11.2 6.6 L13 8.6 L14.8 6.4 M13 8.4 V10" stroke="#10903A" stroke-width="1.4" fill="none"/><path d="M11 11 L15 15 M15 11 L11 15" stroke="#F01010" stroke-width="1.3"/><circle cx="13" cy="13" r="1.7" fill="#F4FBB0"/><circle cx="13" cy="13" r="1.1" fill="#F00000"/></svg>
<svg style="left:70px;top:118px" width="12" height="12" viewBox="0 0 12 12"><polygon points="6.10,1.90 7.32,4.83 10.47,5.08 8.07,7.14 8.80,10.22 6.10,8.57 3.40,10.22 4.13,7.14 1.73,5.08 4.88,4.83" fill="url(#gStar)" stroke="#E6A11E" stroke-width="0.6" stroke-linejoin="round"/></svg>
<svg style="left:84px;top:125px" width="7" height="5" viewBox="0 0 7 5"><path d="M0 0h1v1h-1zM6 0h1v1h-1zM0 1h1v1h-1zM1 1h1v1h-1zM3 1h1v1h-1zM5 1h1v1h-1zM6 1h1v1h-1zM1 2h1v1h-1zM2 2h1v1h-1zM3 2h1v1h-1zM4 2h1v1h-1zM5 2h1v1h-1zM2 3h1v1h-1zM3 3h1v1h-1zM4 3h1v1h-1zM3 4h1v1h-1z" fill="#000" shape-rendering="crispEdges"/></svg>
<svg style="left:99px;top:120px" width="16" height="16" viewBox="0 0 16 16"><path d="M1.5 13.5 V3.6 L2.6 2.5 H7 L8.2 4.5 H14 V13.5 Z" fill="url(#gFold)" stroke="#D9A030" stroke-width="1"/><path d="M2.4 5.4 H13.2" stroke="#FFFBE0" stroke-width="0.9"/></svg>
<svg style="left:111px;top:118px" width="12" height="12" viewBox="0 0 12 12"><polygon points="6.50,1.90 7.72,4.83 10.87,5.08 8.47,7.14 9.20,10.22 6.50,8.57 3.80,10.22 4.53,7.14 2.13,5.08 5.28,4.83" fill="url(#gStar)" stroke="#E6A11E" stroke-width="0.6" stroke-linejoin="round"/></svg>
<svg style="left:126px;top:125px" width="7" height="5" viewBox="0 0 7 5"><path d="M0 0h1v1h-1zM6 0h1v1h-1zM0 1h1v1h-1zM1 1h1v1h-1zM3 1h1v1h-1zM5 1h1v1h-1zM6 1h1v1h-1zM1 2h1v1h-1zM2 2h1v1h-1zM3 2h1v1h-1zM4 2h1v1h-1zM5 2h1v1h-1zM2 3h1v1h-1zM3 3h1v1h-1zM4 3h1v1h-1zM3 4h1v1h-1z" fill="#000" shape-rendering="crispEdges"/></svg>
<svg style="left:380px;top:120px" width="16" height="16" viewBox="0 0 16 16"><rect x="0.6" y="0.6" width="14.8" height="11.8" fill="#fff" stroke="#54487C" stroke-width="1.2"/><rect x="2.8" y="5.4" width="4.8" height="10" fill="#fff" stroke="#54487C" stroke-width="1.1"/><rect x="3.4" y="6" width="3.6" height="1.6" fill="#B8C0DC"/><path d="M4.5 8.4 V13.6 M4.5 10 H6.2 M4.5 13 H6.2" stroke="#2070C0" stroke-width="1.1"/></svg>
<svg style="left:408px;top:120px" width="14" height="16" viewBox="0 0 14 16"><rect x="0.6" y="0.6" width="12.8" height="6.9" fill="#fff" stroke="#54487C" stroke-width="1.2"/><rect x="0.6" y="8.1" width="12.8" height="6.5" fill="#fff" stroke="#54487C" stroke-width="1.2"/><path d="M2.8 2 V14 M2.8 3.6 H5 M2.8 6.6 H5 M2.8 10.4 H5 M2.8 13.4 H5" stroke="#2070C0" stroke-width="1.1"/></svg>
<svg style="left:435px;top:119px" width="18" height="18" viewBox="0 0 18 18"><circle cx="9" cy="9" r="7.2" fill="url(#gHelp)" stroke="#9DB8F2" stroke-width="0.7"/><ellipse cx="9" cy="5.6" rx="5.6" ry="3.6" fill="#fff" opacity="0.28"/><path d="M6.2 7 C6.4 3.8 11.8 3.8 11.8 6.8 C11.8 8.8 9.2 9 9.2 11.2" stroke="#fff" stroke-width="1.8" fill="none" opacity="0.95"/><circle cx="9.2" cy="13.5" r="1.1" fill="#fff"/></svg>
<svg style="left:13px;top:148px" width="16" height="16" viewBox="0 0 16 16"><path d="M5.5 2.3 L7.8 0.4 H15.6 V4.6 L10.7 5.2 H5.5 Z" fill="#2E3C3E" stroke="#111" stroke-width="0.6"/><path d="M11.3 8.4 L15.6 4.8 V11.6 L11.3 15.4 Z" fill="#7686B6" stroke="#111" stroke-width="0.9"/><rect x="2.6" y="8.4" width="8.7" height="7" fill="#A9B5DB" stroke="#111" stroke-width="0.9"/><path d="M0.4 5.3 L14.8 4.9 L11.3 8.4 H2.6 Z" fill="#8E9CCC" stroke="#111" stroke-width="0.9" stroke-linejoin="round"/></svg>
<svg style="left:19px;top:171px" width="6" height="10" viewBox="0 0 6 10"><path d="M0.6 0.8 L4.8 4.6 L0.6 8.4 Z" fill="#fff" stroke="#A6A6A6" stroke-width="0.9"/></svg>
<svg style="left:30px;top:166px" width="15" height="18" viewBox="0 0 15 18"><path d="M10.2 7.6 L13.6 4.6 V12.6 L10.2 16.4 Z" fill="#6C7CAC" stroke="#111" stroke-width="0.9"/><path d="M0.6 7.6 L3.6 4.8 H13.6 L10.2 7.6 Z" fill="#8E9CCC" stroke="#111" stroke-width="0.8"/><rect x="0.6" y="7.6" width="9.6" height="8.8" fill="#A9B5DB" stroke="#111" stroke-width="0.9"/><path d="M5.2 7.6 V16.4 M11.8 6.2 V14.6" stroke="#3E6E86" stroke-width="1.7"/><path d="M5.6 5.6 C2.4 5.2 2 1.8 4.2 1.6 C5.6 1.6 6 3.6 6 5.4 C6 3 7.6 1 9.4 1.4 C11 2 9.4 5 6.2 5.6" fill="none" stroke="#3E6E86" stroke-width="1.4"/></svg>
<svg style="left:18px;top:191px" width="7" height="7" viewBox="0 0 7 7"><path d="M6 0.6 V5.8 H0.6 Z" fill="#595959" stroke="#262626" stroke-width="0.9"/></svg>
<svg style="left:29px;top:186px" width="16" height="16" viewBox="0 0 16 16"><rect x="0.5" y="0.5" width="15" height="15" fill="#fff" stroke="#222" stroke-width="1"/><rect x="1" y="1" width="14" height="2.4" fill="url(#gBar)"/><rect x="2.5" y="5.5" width="4" height="3" fill="#fff" stroke="#222"/><rect x="9.5" y="5.5" width="4" height="3" fill="#fff" stroke="#222"/><rect x="2.5" y="10.5" width="4" height="3" fill="#fff" stroke="#222"/><rect x="9.5" y="10.5" width="4" height="3" fill="#fff" stroke="#222"/></svg>
<svg style="left:45px;top:205px" width="16" height="16" viewBox="0 0 16 16"><rect x="0.5" y="0.5" width="15" height="15" fill="#fff" stroke="#222" stroke-width="1"/><rect x="1" y="1" width="14" height="2.4" fill="url(#gBar)"/><rect x="2.5" y="5.5" width="4" height="3" fill="#fff" stroke="#222"/><rect x="9.5" y="5.5" width="4" height="3" fill="#fff" stroke="#222"/><rect x="2.5" y="10.5" width="4" height="3" fill="#fff" stroke="#222"/><rect x="9.5" y="10.5" width="4" height="3" fill="#fff" stroke="#222"/></svg>
<svg style="left:45px;top:224px" width="16" height="16" viewBox="0 0 16 16"><rect x="0.5" y="0.5" width="15" height="15" fill="#fff" stroke="#222" stroke-width="1"/><rect x="1" y="1" width="14" height="2.4" fill="url(#gBar)"/><rect x="2.5" y="5.5" width="4" height="3" fill="#fff" stroke="#222"/><rect x="9.5" y="5.5" width="4" height="3" fill="#fff" stroke="#222"/><rect x="2.5" y="10.5" width="4" height="3" fill="#fff" stroke="#222"/><rect x="9.5" y="10.5" width="4" height="3" fill="#fff" stroke="#222"/></svg>
<svg style="left:45px;top:243px" width="16" height="16" viewBox="0 0 16 16"><rect x="0.5" y="0.5" width="15" height="15" fill="#FFF689" stroke="#222" stroke-width="1"/><rect x="11" y="1" width="4" height="14" fill="#F4FBB0"/><path d="M0 5.5 H16 M0 10.5 H16 M10.5 0 V16" stroke="#222" stroke-width="1"/><path d="M11.2 1.6 L13 3.6 L14.8 1.4 M13 3.4 V5" stroke="#10903A" stroke-width="1.4" fill="none"/><path d="M11.2 6.6 L13 8.6 L14.8 6.4 M13 8.4 V10" stroke="#10903A" stroke-width="1.4" fill="none"/><path d="M11 11 L15 15 M15 11 L11 15" stroke="#F01010" stroke-width="1.3"/><circle cx="13" cy="13" r="1.7" fill="#F4FBB0"/><circle cx="13" cy="13" r="1.1" fill="#F00000"/></svg>
<svg style="left:29px;top:262px" width="16" height="16" viewBox="0 0 16 16"><rect x="0.5" y="0.5" width="15" height="15" fill="#fff" stroke="#222" stroke-width="1"/><rect x="1" y="1" width="14" height="2.4" fill="url(#gBar)"/><rect x="2.5" y="5.5" width="4" height="3" fill="#fff" stroke="#222"/><rect x="9.5" y="5.5" width="4" height="3" fill="#fff" stroke="#222"/><rect x="2.5" y="10.5" width="4" height="3" fill="#fff" stroke="#222"/><rect x="9.5" y="10.5" width="4" height="3" fill="#fff" stroke="#222"/></svg>
<svg style="left:29px;top:281px" width="16" height="16" viewBox="0 0 16 16"><rect x="0.5" y="0.5" width="15" height="15" fill="#fff" stroke="#222" stroke-width="1"/><rect x="1" y="1" width="14" height="2.4" fill="url(#gBar)"/><rect x="2.5" y="5.5" width="4" height="3" fill="#fff" stroke="#222"/><rect x="9.5" y="5.5" width="4" height="3" fill="#fff" stroke="#222"/><rect x="2.5" y="10.5" width="4" height="3" fill="#fff" stroke="#222"/><rect x="9.5" y="10.5" width="4" height="3" fill="#fff" stroke="#222"/></svg>
<svg width="0" height="0" style="left:0;top:0"><defs><linearGradient id="gPG" x1="0" y1="0" x2="0.3" y2="1"><stop offset="0" stop-color="#48DA20"/><stop offset="0.5" stop-color="#34B020"/><stop offset="1" stop-color="#1E6E1E"/></linearGradient><linearGradient id="gPR" x1="0" y1="0" x2="0.3" y2="1"><stop offset="0" stop-color="#FF2020"/><stop offset="0.5" stop-color="#D83030"/><stop offset="1" stop-color="#984030"/></linearGradient><linearGradient id="gOr" x1="0" y1="0" x2="0" y2="1"><stop offset="0" stop-color="#FFE040"/><stop offset="1" stop-color="#FFA800"/></linearGradient><linearGradient id="gPink" x1="0" y1="0" x2="0" y2="1"><stop offset="0" stop-color="#FFC4C4"/><stop offset="1" stop-color="#F89090"/></linearGradient><linearGradient id="gLB" x1="0" y1="0" x2="0.4" y2="1"><stop offset="0" stop-color="#C0D4FF"/><stop offset="1" stop-color="#6E86CC"/></linearGradient></defs></svg>
<svg style="left:482.6px;top:121px" width="11" height="16" viewBox="0 0 11 16"><path d="M0.8 1 H2 L9.4 7.4 V8.4 L2 15 H0.8 Z" fill="url(#gPG)" stroke="#1C5C1C" stroke-width="0.9" stroke-linejoin="round"/></svg>
<svg style="left:510.6px;top:121px" width="11" height="16" viewBox="0 0 11 16"><path d="M0.8 1 H2 L9.4 7.4 V8.4 L2 15 H0.8 Z" fill="url(#gPR)" stroke="#7C2C20" stroke-width="0.9" stroke-linejoin="round"/></svg>
<svg style="left:534px;top:120px" width="17" height="18" viewBox="0 0 17 18"><path d="M1 7.6 H2 L7.4 11.8 V12.6 L2 16.6 H1 Z" fill="url(#gPG)" stroke="#1C5C1C" stroke-width="0.8"/><rect x="8.6" y="1.4" width="7" height="5.8" rx="0.6" fill="url(#gOr)" stroke="#C86400" stroke-width="1"/><rect x="8.6" y="9.4" width="7" height="5.8" rx="0.6" fill="url(#gOr)" stroke="#C86400" stroke-width="1"/></svg>
<svg style="left:564px;top:123px" width="12" height="13" viewBox="0 0 12 13"><rect x="1" y="5.2" width="9.6" height="6.4" fill="url(#gOr)" stroke="#C86400" stroke-width="1"/><path d="M1 1.2 H10.6 L5.8 7.2 Z" fill="#30B828" stroke="#1C6C1C" stroke-width="0.8" stroke-linejoin="round"/></svg>
<svg style="left:591px;top:122px" width="13" height="14" viewBox="0 0 13 14"><rect x="0.7" y="1.2" width="4.2" height="11.4" fill="#FFF4D8" stroke="#EEC49C" stroke-width="0.9"/><rect x="7.5" y="1.2" width="4.4" height="11.4" fill="#FFF4D8" stroke="#EEC49C" stroke-width="0.9"/></svg>
<svg style="left:627px;top:121px" width="16" height="16" viewBox="0 0 16 16"><path d="M3.2 8.6 V11.4 H8" stroke="#A8BED2" stroke-width="1.2" fill="none"/><rect x="1.2" y="1.4" width="7.4" height="7" fill="url(#gPink)" stroke="#E48484" stroke-width="0.9"/><path d="M8.4 5.4 H9.4 L14.8 9.8 V10.6 L9.4 14.8 H8.4 Z" fill="#A6E488" stroke="#84BC74" stroke-width="0.8"/></svg>
<svg style="left:656px;top:122px" width="14" height="14" viewBox="0 0 14 14"><rect x="1.4" y="1.4" width="11.4" height="11.4" fill="#F2A8B2" stroke="#949494" stroke-width="0.9"/></svg>
<svg style="left:1419px;top:122px" width="14" height="14" viewBox="0 0 14 14"><rect x="1.3" y="1.3" width="11.4" height="11.4" fill="#DCDCDC" stroke="#E49494" stroke-width="1"/><rect x="3.6" y="3.6" width="6.8" height="6.8" fill="url(#gPink)" stroke="#EC9C9C" stroke-width="0.7"/></svg>
<svg style="left:1459px;top:120px" width="18" height="18" viewBox="0 0 18 18"><rect x="6.7" y="6.7" width="10" height="9.6" fill="#fff" stroke="#000" stroke-width="1.2"/><rect x="4.7" y="4.7" width="10" height="9.6" fill="#fff" stroke="#000" stroke-width="1.2"/><rect x="2.7" y="2.7" width="10" height="9.6" fill="#fff" stroke="#000" stroke-width="1.2"/><rect x="0.7" y="0.7" width="10" height="9.6" fill="#fff" stroke="#000" stroke-width="1.2"/><path d="M2.3 2.5 H5 M6.4 2.5 H9.1" stroke="#000090" stroke-width="1.1"/><path d="M2.3 4.5 H5 M6.4 4.5 H9.1" stroke="#000090" stroke-width="1.1"/><path d="M2.3 6.5 H5 M6.4 6.5 H9.1" stroke="#000090" stroke-width="1.1"/><path d="M2.3 8.5 H5 M6.4 8.5 H9.1" stroke="#000090" stroke-width="1.1"/></svg>
<svg style="left:1483px;top:126px" width="9" height="5" viewBox="0 0 9 5"><path d="M0.6 0.2 H8.2 L4.4 4.2 Z" fill="#000"/></svg>
<svg style="left:1499px;top:115px" width="27" height="28" viewBox="0 0 27 28"><path d="M4.2 3 L14.6 3 L17 10.8 L7.4 12 Z" fill="#D3DCF2" stroke="#C4D0EC" stroke-width="0.8"/><path d="M2.4 14.6 L7 10.6 L19.4 9.6 L23.6 13.4 L23.6 18 L11.4 21.6 L2.4 17.6 Z" fill="#ECECEC" stroke="#DADADA" stroke-width="0.7"/><path d="M7.6 12.6 L17.8 11.2 L20.6 13.8 L10.2 15.6 Z" fill="#F8F8F8"/><path d="M2.4 17.4 L11.4 21.4 L11.4 26 L2.4 21.6 Z" fill="#FCFCFC" stroke="#DCDCDC" stroke-width="0.7"/><path d="M11.4 21.4 L23.6 17.8 L23.6 22 L11.4 26 Z" fill="#E2E2E2" stroke="#D4D4D4" stroke-width="0.7"/><path d="M13.4 22.2 L21.8 19.6 L21.8 21.4 L13.4 24.4 Z" fill="#B4B4B4"/><path d="M15.6 24.6 L23.4 22 L25.2 23.2 L17.6 26.2 Z" fill="#F6F6F2" stroke="#E0E0D8" stroke-width="0.5"/></svg>
<svg style="left:478px;top:150px" width="18" height="18" viewBox="0 0 18 18"><rect x="3.9" y="1.9" width="12.2" height="12.2" fill="#fff" stroke="#7C9CB8" stroke-width="1.8"/><path d="M6.4 7 L9 9.8 L14.2 4.4" stroke="#108010" stroke-width="1.7" fill="none"/><path d="M3.4 9.4 H6.2 V11.8 H8.6 V14.6 H6.2 V17 H3.4 V14.6 H1 V11.8 H3.4 Z" fill="#94E474" stroke="#203050" stroke-width="0.9" stroke-linejoin="round"/></svg>
<svg style="left:506px;top:150px" width="18" height="18" viewBox="0 0 18 18"><rect x="2.9" y="1.9" width="13.2" height="12.2" fill="#F8F8F8" stroke="#BCD2DE" stroke-width="1.8"/><path d="M6.4 6.8 L9 9.6 L14 4.4" stroke="#92D492" stroke-width="1.6" fill="none"/><rect x="1" y="11.6" width="7.6" height="3.2" fill="#F8B4BC" stroke="#94ACBC" stroke-width="0.8"/></svg>
<svg style="left:544px;top:151px" width="17" height="16" viewBox="0 0 17 16"><path d="M8.5 1 L15.8 9.6 H11.6 V15 H5.4 V9.6 H1.2 Z" fill="#AAE8A2" stroke="#7ED07E" stroke-width="1" stroke-linejoin="round"/></svg>
<svg style="left:572px;top:151px" width="17" height="16" viewBox="0 0 17 16"><path d="M8.5 15 L15.8 6.4 H11.6 V1 H5.4 V6.4 H1.2 Z" fill="#AAE8A2" stroke="#7ED07E" stroke-width="1" stroke-linejoin="round"/></svg>
<svg style="left:1009px;top:151px" width="20" height="17" viewBox="0 0 20 17"><rect x="6.4" y="1.4" width="5.2" height="5" fill="#3CE23C" stroke="#3A587A" stroke-width="0.9"/><path d="M6.4 6.4 V1.4 H11.600000000000001" stroke="#A8B8E4" stroke-width="0.9" fill="none"/><rect x="9.4" y="5.3" width="5.2" height="5" fill="#3CE23C" stroke="#3A587A" stroke-width="0.9"/><path d="M9.4 10.3 V5.3 H14.600000000000001" stroke="#A8B8E4" stroke-width="0.9" fill="none"/><rect x="12.4" y="9.3" width="5.2" height="5" fill="#3CE23C" stroke="#3A587A" stroke-width="0.9"/><path d="M12.4 14.3 V9.3 H17.6" stroke="#A8B8E4" stroke-width="0.9" fill="none"/><path d="M1 9 L4.6 12.6 L1 16.2 Z M5 9 L8.8 12.6 L5 16.2 Z" fill="#305068"/></svg>
<svg style="left:1031px;top:156px" width="7" height="5" viewBox="0 0 7 5"><path d="M0 0h1v1h-1zM6 0h1v1h-1zM0 1h1v1h-1zM1 1h1v1h-1zM3 1h1v1h-1zM5 1h1v1h-1zM6 1h1v1h-1zM1 2h1v1h-1zM2 2h1v1h-1zM3 2h1v1h-1zM4 2h1v1h-1zM5 2h1v1h-1zM2 3h1v1h-1zM3 3h1v1h-1zM4 3h1v1h-1zM3 4h1v1h-1z" fill="#000" shape-rendering="crispEdges"/></svg>
<svg style="left:1056px;top:152px" width="20" height="15" viewBox="0 0 20 15"><rect x="1.4" y="1.4" width="5" height="5" fill="#E47C7C" stroke="#C4CEE6" stroke-width="0.9"/><path d="M1.4 6.4 H6.4 V2.4" stroke="#9AAAB8" stroke-width="0.8" fill="none"/><path d="M6.4 4 H9.6 V8" stroke="#9AAAB8" stroke-width="0.9" fill="none"/><rect x="8" y="8.4" width="5" height="5" fill="#fff" stroke="#C4CEE6" stroke-width="0.9"/><path d="M8 13.4 H13 V9.4" stroke="#9AAAB8" stroke-width="0.8" fill="none"/><path d="M1.2 13.6 H6" stroke="#8A9CAC" stroke-width="1.1"/><path d="M1.4 10.4 H5.8 L3.6 8.2 Z M1.2 12.8 H6 L3.6 10.2 Z" fill="#8A9CAC"/><path d="M13.8 4.6 C13.6 1.4 18.6 1.4 18.4 4.4 C18.3 6 16.2 6.2 16.2 8.6" stroke="#93A3B3" stroke-width="1.9" fill="none"/><rect x="15.200000000000001" y="10" width="2" height="2" fill="#93A3B3"/></svg>
<svg style="left:1086px;top:152px" width="20" height="15" viewBox="0 0 20 15"><rect x="1" y="1.2" width="5" height="5" fill="#fff" stroke="#C4CEE6" stroke-width="0.9"/><path d="M1 6.2 H6 V2.2" stroke="#9AAAB8" stroke-width="0.8" fill="none"/><path d="M7.2 1.3 H12.2" stroke="#8A9CAC" stroke-width="1.1"/><path d="M7.6 2.2 H11.8 L9.7 4.2 Z M7.4 4.2 H12 L9.7 6.8 Z" fill="#8A9CAC"/><path d="M3.4 6.4 V9 H6.4" stroke="#9AAAB8" stroke-width="0.9" fill="none"/><rect x="6.6" y="8.4" width="5" height="5" fill="#E47C7C" stroke="#C4CEE6" stroke-width="0.9"/><path d="M6.6 13.4 H11.6 V9.4" stroke="#9AAAB8" stroke-width="0.8" fill="none"/><path d="M14.0 4.6 C13.799999999999999 1.4 18.8 1.4 18.6 4.4 C18.5 6 16.4 6.2 16.4 8.6" stroke="#93A3B3" stroke-width="1.9" fill="none"/><rect x="15.4" y="10" width="2" height="2" fill="#93A3B3"/></svg>
<svg style="left:1116px;top:152px" width="20" height="15" viewBox="0 0 20 15"><rect x="1" y="1.2" width="5" height="5" fill="#fff" stroke="#C4CEE6" stroke-width="0.9"/><path d="M1 6.2 H6 V2.2" stroke="#9AAAB8" stroke-width="0.8" fill="none"/><path d="M7.2 1.3 H12.2" stroke="#8A9CAC" stroke-width="1.1"/><path d="M7.6 2.2 H11.8 L9.7 4.2 Z M7.4 4.2 H12 L9.7 6.8 Z" fill="#8A9CAC"/><path d="M3.4 6.4 V9 H6.4" stroke="#9AAAB8" stroke-width="0.9" fill="none"/><rect x="6.4" y="8.4" width="5" height="5" fill="#E2E2E2" stroke="#C4CEE6" stroke-width="0.9"/><path d="M6.4 13.4 H11.4 V9.4" stroke="#9AAAB8" stroke-width="0.8" fill="none"/><path d="M14.0 4.6 C13.799999999999999 1.4 18.8 1.4 18.6 4.4 C18.5 6 16.4 6.2 16.4 8.6" stroke="#93A3B3" stroke-width="1.9" fill="none"/><rect x="15.4" y="10" width="2" height="2" fill="#93A3B3"/></svg>
<svg style="left:1146px;top:152px" width="20" height="15" viewBox="0 0 20 15"><rect x="1" y="1.2" width="5" height="5" fill="#fff" stroke="#C4CEE6" stroke-width="0.9"/><path d="M1 6.2 H6 V2.2" stroke="#9AAAB8" stroke-width="0.8" fill="none"/><path d="M7.2 1.3 H12.2" stroke="#8A9CAC" stroke-width="1.1"/><path d="M7.6 2.2 H11.8 L9.7 4.2 Z M7.4 4.2 H12 L9.7 6.8 Z" fill="#8A9CAC"/><path d="M3.4 6.4 V9 H6" stroke="#9AAAB8" stroke-width="0.9" fill="none"/><circle cx="8.8" cy="11" r="2.5" fill="#fff" stroke="#9AAAB8" stroke-width="0.9"/><path d="M7.6 12.2 L10 9.8" stroke="#9AAAB8" stroke-width="0.9"/><path d="M14.0 4.6 C13.799999999999999 1.4 18.8 1.4 18.6 4.4 C18.5 6 16.4 6.2 16.4 8.6" stroke="#93A3B3" stroke-width="1.9" fill="none"/><rect x="15.4" y="10" width="2" height="2" fill="#93A3B3"/></svg>
<svg style="left:1186px;top:151px" width="18" height="17" viewBox="0 0 18 17"><rect x="5.8" y="1.3" width="11" height="10.6" fill="#fff" stroke="#B4AC9C" stroke-width="1.2"/><rect x="8.2" y="3.4" width="3.8" height="2.6" fill="#CACACA"/><rect x="10.2" y="7.4" width="4.6" height="2.6" fill="#CACACA"/><path d="M1 11.6 L5.6 7 V9.4 H11 V14 H5.6 V16.4 Z" fill="url(#gLB)" stroke="#9AB0EC" stroke-width="0.6" stroke-linejoin="round"/></svg>
<svg style="left:476px;top:179px" width="16" height="16" viewBox="0 0 16 16"><rect x="0.5" y="0.5" width="15" height="15" fill="#FFF689" stroke="#222" stroke-width="1"/><rect x="11" y="1" width="4" height="14" fill="#F4FBB0"/><path d="M0 5.5 H16 M0 10.5 H16 M10.5 0 V16" stroke="#222" stroke-width="1"/><path d="M11.2 1.6 L13 3.6 L14.8 1.4 M13 3.4 V5" stroke="#10903A" stroke-width="1.4" fill="none"/><path d="M11.2 6.6 L13 8.6 L14.8 6.4 M13 8.4 V10" stroke="#10903A" stroke-width="1.4" fill="none"/><path d="M11 11 L15 15 M15 11 L11 15" stroke="#F01010" stroke-width="1.3"/><circle cx="13" cy="13" r="1.7" fill="#F4FBB0"/><circle cx="13" cy="13" r="1.1" fill="#F00000"/></svg>
</body></html>
